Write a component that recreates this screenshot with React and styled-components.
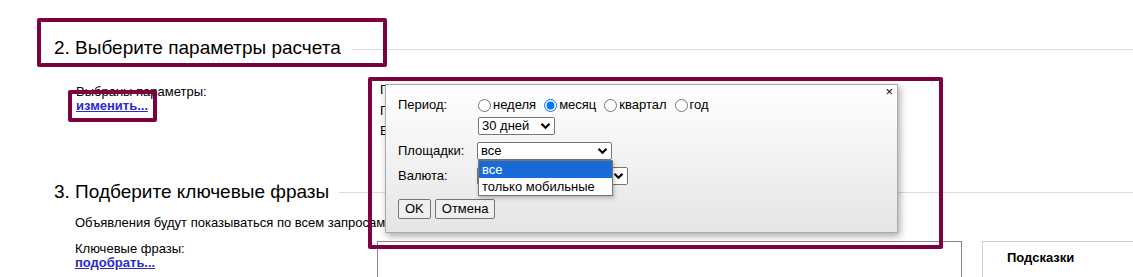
import React from "react";
import styled, { createGlobalStyle } from "styled-components";

const Global = createGlobalStyle`
  html, body { margin: 0; padding: 0; background: #fff; }
  body { font-family: "Liberation Sans", Arial, sans-serif; }
`;

const Page = styled.div`
  position: relative;
  width: 1133px;
  height: 277px;
  overflow: hidden;
  background: #fff;
  font-family: "Liberation Sans", Arial, sans-serif;
  font-size: 13px;
  color: #000;
`;

const Section = styled.section`
  padding-top: ${(p) => p.$top}px;
`;

const Header = styled.div`
  display: flex;
  align-items: center;
  padding-left: 54px;
  height: 24px;
`;

const Title = styled.h2`
  margin: 0;
  font-size: 19px;
  font-weight: normal;
  line-height: 24px;
  white-space: nowrap;
  color: #000;
`;

const Rule = styled.div`
  flex: 1;
  height: 1px;
  background: #dcdcdc;
  margin-left: ${(p) => p.$gap}px;
  margin-top: ${(p) => p.$shift}px;
`;

const ParamsRow = styled.div`
  display: flex;
  margin-top: 20px;
`;

const ParamsLeft = styled.div`
  width: 380px;
  flex-shrink: 0;
  padding-left: 76px;
  box-sizing: border-box;
  padding-top: 5px;
  line-height: 14px;
`;

const Line = styled.div`
  line-height: ${(p) => p.$lh || 14}px;
  white-space: nowrap;
`;

const Link = styled.a`
  display: block;
  color: #2b2bd0;
  font-weight: bold;
  text-decoration: underline;
  line-height: 14px;
  cursor: pointer;
`;

const ParamsList = styled.div`
  padding-left: 0;
`;

const Text = styled.div`
  padding-left: 75px;
  line-height: 15px;
  margin-top: ${(p) => p.$top || 0}px;
  white-space: nowrap;
`;

const KeyRow = styled.div`
  display: flex;
  align-items: flex-start;
  margin-top: 11px;
`;

const KeyLeft = styled.div`
  width: 377px;
  flex-shrink: 0;
  padding-left: 75px;
  box-sizing: border-box;
  padding-top: 1px;
`;

const TextArea = styled.div`
  width: 585px;
  height: 80px;
  border: 1px solid #888;
  box-sizing: border-box;
  flex-shrink: 0;
`;

const Hints = styled.div`
  margin-left: 20px;
  width: 200px;
  height: 80px;
  border: 1px solid #d0d0d0;
  border-right: none;
  box-sizing: border-box;
  padding: 8px 0 0 24px;
  flex-shrink: 0;
`;

const HintTitle = styled.div`
  font-weight: bold;
  font-size: 13px;
  line-height: 15px;
`;

const HintText = styled.div`
  color: #aaa;
  font-size: 12px;
  line-height: 14px;
  margin-top: 10px;
  white-space: nowrap;
`;

/* Popup */
const Popup = styled.div`
  position: absolute;
  left: 385px;
  top: 84px;
  width: 513px;
  height: 149px;
  box-sizing: border-box;
  border: 1px solid #ababab;
  background: linear-gradient(#ffffff, #e5e5e5);
  box-shadow: 2px 3px 7px rgba(0, 0, 0, 0.35);
  padding: 12px 0 0 12px;
  font-family: "Liberation Sans", Arial, sans-serif;
  font-size: 13px;
  z-index: 5;
`;

const Close = styled.span`
  position: absolute;
  right: 4px;
  top: 0px;
  font-size: 13px;
  line-height: 14px;
  color: #000;
  cursor: pointer;
`;

const Form = styled.div`
  display: grid;
  grid-template-columns: 80px auto;
  row-gap: 7px;
  align-items: start;
`;

const Label = styled.div`
  line-height: ${(p) => p.$lh || 18}px;
`;

const Controls = styled.div`
  display: flex;
  flex-direction: column;
  align-items: flex-start;
  gap: 4px;
`;

const Radios = styled.div`
  display: flex;
  align-items: center;
  height: 16px;
`;

const RadioLabel = styled.label`
  display: flex;
  align-items: center;
  margin-right: 8px;
  white-space: nowrap;
  line-height: 16px;
`;

const Radio = styled.input`
  width: 13px;
  height: 13px;
  margin: 0 2px 0 0;
`;

const SelectBox = styled.div`
  display: flex;
  align-items: center;
  justify-content: space-between;
  width: ${(p) => p.$w}px;
  height: 18px;
  box-sizing: border-box;
  border: 1px solid #767676;
  border-radius: 2px;
  background: #fff;
  padding: 0 3px 0 3px;
  margin-left: ${(p) => p.$ml || 0}px;
  line-height: 16px;
  white-space: nowrap;
`;

const Chevron = () => (
  <svg width="11" height="8" viewBox="0 0 11 8">
    <path d="M1.5 1.8 L5.5 5.8 L9.5 1.8" fill="none" stroke="#000" strokeWidth="2.2" />
  </svg>
);

const Buttons = styled.div`
  display: flex;
  gap: 4px;
  margin-top: 14px;
`;

const Button = styled.button`
  height: 20px;
  padding: 0 ${(p) => p.$px}px;
  font-family: "Liberation Sans", Arial, sans-serif;
  font-size: 13px;
  line-height: 18px;
  color: #000;
  background: #efefef;
  border: 1px solid #767676;
  border-radius: 2px;
`;

const DropList = styled.div`
  position: absolute;
  left: 92px;
  top: 75px;
  width: 135px;
  box-sizing: border-box;
  border: 1px solid #767676;
  background: #fff;
  box-shadow: 1px 2px 4px rgba(0, 0, 0, 0.25);
`;

const Option = styled.div`
  height: 17px;
  line-height: 17px;
  padding-left: 3px;
  white-space: nowrap;
  background: ${(p) => (p.$active ? "#1a6ad5" : "#fff")};
  color: ${(p) => (p.$active ? "#fff" : "#000")};
`;

/* Annotation highlight boxes */
const Mark = styled.div`
  position: absolute;
  left: ${(p) => p.$x}px;
  top: ${(p) => p.$y}px;
  width: ${(p) => p.$w}px;
  height: ${(p) => p.$h}px;
  box-sizing: border-box;
  border: 4px solid #7d0041;
  border-radius: 2px;
  z-index: 10;
  pointer-events: none;
`;

export default function App() {
  return (
    <Page>
      <Global />
      <Section $top={36}>
        <Header>
          <Title>2. Выберите параметры расчета</Title>
          <Rule $gap={11} $shift={3} />
        </Header>
        <ParamsRow>
          <ParamsLeft>
            <Line>Выбраны параметры:</Line>
            <Link>изменить...</Link>
          </ParamsLeft>
          <ParamsList>
            <Line $lh={20.5}>Период: месяц</Line>
            <Line $lh={20.5}>Площадки: все</Line>
            <Line $lh={20.5}>Валюта: у.е.</Line>
          </ParamsList>
        </ParamsRow>
      </Section>

      <Section $top={38}>
        <Header>
          <Title>3. Подберите ключевые фразы</Title>
          <Rule $gap={10} $shift={1} />
        </Header>
        <Text $top={11}>Объявления будут показываться по всем запросам, содержащим ключевые фразы.</Text>
        <KeyRow>
          <KeyLeft>
            <Line>Ключевые фразы:</Line>
            <Link>подобрать...</Link>
          </KeyLeft>
          <TextArea />
          <Hints>
            <HintTitle>Подсказки</HintTitle>
            <HintText>Укажите ключевые фразы</HintText>
          </Hints>
        </KeyRow>
      </Section>

      <Popup>
        <Close>×</Close>
        <Form>
          <Label $lh={16}>Период:</Label>
          <Controls>
            <Radios>
              <RadioLabel>
                <Radio type="radio" name="period" />
                неделя
              </RadioLabel>
              <RadioLabel>
                <Radio type="radio" name="period" defaultChecked />
                месяц
              </RadioLabel>
              <RadioLabel>
                <Radio type="radio" name="period" />
                квартал
              </RadioLabel>
              <RadioLabel>
                <Radio type="radio" name="period" />
                год
              </RadioLabel>
            </Radios>
            <SelectBox $w={77}>
              <span>30 дней</span>
              <Chevron />
            </SelectBox>
          </Controls>
          <Label>Площадки:</Label>
          <SelectBox $w={135} $ml={-1}>
            <span>все</span>
            <Chevron />
          </SelectBox>
          <Label>Валюта:</Label>
          <SelectBox $w={151} $ml={-1}>
            <span>у.е.</span>
            <Chevron />
          </SelectBox>
        </Form>
        <Buttons>
          <Button $px={6}>OK</Button>
          <Button $px={6}>Отмена</Button>
        </Buttons>
        <DropList>
          <Option $active>все</Option>
          <Option>только мобильные</Option>
        </DropList>
      </Popup>

      <Mark $x={37} $y={18} $w={350} $h={49} />
      <Mark $x={68} $y={90} $w={89} $h={32} />
      <Mark $x={368} $y={77} $w={575} $h={172} />
    </Page>
  );
}
